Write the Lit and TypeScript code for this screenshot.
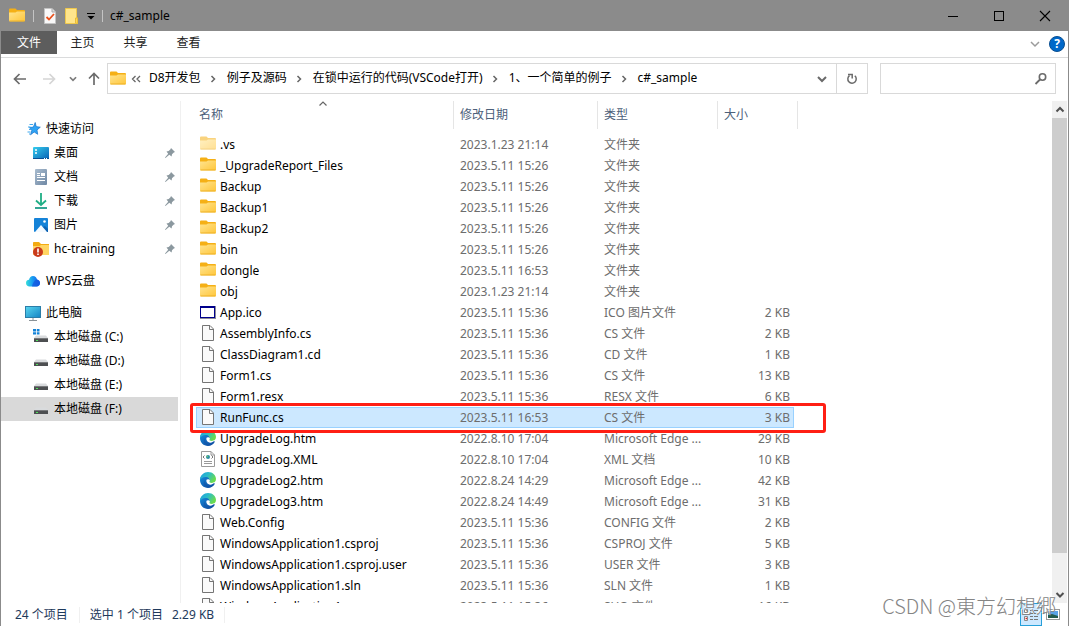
import { LitElement, html, css, svg, nothing, TemplateResult } from "lit";
import { customElement, property } from "lit/decorators.js";
import { classMap } from "lit/directives/class-map.js";

const folder = (light = false) => html`<svg class="icon" width="16" height="16" viewBox="0 0 16 16" opacity=${light ? "0.55" : "1"}>
  <defs><linearGradient id="fold" x1="0" y1="0" x2="1" y2="1"><stop offset="0" stop-color="#ffe48f" /><stop offset="1" stop-color="#ffc63a" /></linearGradient></defs>
  <path d="M0 1.500Q0 .5 1 .5H6.500L8 2H15Q16 2 16 3V8H0Z" fill="#f5b016" />
  <path d="M0 4.500H6.500L8 3.500H16V12.500Q16 13.500 15 13.500H1Q0 13.500 0 12.500Z" fill="url(#fold)" />
  <path d="M.5 13H15.500" stroke="#e9a91c" stroke-width=".8" />
</svg>`;

const page = () => html`<svg class="icon" width="16" height="16" viewBox="0 0 16 16">
  <path d="M2.500 .5H10L13.500 4V15.500H2.500Z" fill="#fafafa" stroke="#757575" />
  <path d="M9.500 .5V4.500H13.500" fill="none" stroke="#757575" />
</svg>`;

const ico = () => html`<svg class="icon" width="16" height="16" viewBox="0 0 16 16">
  <rect x="0" y="2" width="16" height="13" fill="#8c8c98" /><rect x="0" y="2" width="15" height="12" fill="#00008b" />
  <rect x="1" y="4" width="13" height="9" fill="#fff" />
</svg>`;

const xml = () => html`<svg class="icon" width="16" height="16" viewBox="0 0 16 16">
  <path d="M1.500 .5H11L14.500 4V15.500H1.500Z" fill="#fff" stroke="#9a9a9a" /><path d="M11 .5V4H14.500" fill="none" stroke="#9a9a9a" />
  <path d="M4.500 4.500L3 6L4.500 7.500M11.500 4.500L13 6L11.500 7.500" fill="none" stroke="#666" stroke-width=".9" /><circle cx="8" cy="6" r="2" fill="#2f8fa3" />
  <circle cx="7.400" cy="5.400" r=".8" fill="#69c56c" /><path d="M4 10.500H12M4 12.500H12" stroke="#999" />
</svg>`;

const edge = () => html`<svg class="icon" width="16" height="16" viewBox="0 0 16 16">
  <defs>
    <linearGradient id="eg" x1="0" y1="0" x2="1" y2=".5"><stop offset="0" stop-color="#1c9fe0" /><stop offset=".5" stop-color="#2bbcc8" /><stop offset="1" stop-color="#6bdc4c" /></linearGradient>
    <linearGradient id="eb" x1="0" y1="0" x2=".8" y2="1"><stop offset="0" stop-color="#1690e0" /><stop offset="1" stop-color="#0e4b9f" /></linearGradient>
  </defs>
  <path d="M0 8C0 3.500 3.500 1.500 7 2.500L10 7L8 10L15 11.500C13.500 14.300 11 16 8 16C3.600 16 0 12.400 0 8Z" fill="url(#eb)" />
  <path d="M0 8C.3 3 4 0 8 0C13 0 16 3.600 16 7C16 9.600 14 11 12 11C10 11 9 10.300 9.300 9.500C10.300 8 9.600 5.600 6.600 5C3.600 4.500 .8 6 0 8Z" fill="url(#eg)" />
  <path d="M6.500 7.800C7.300 6.700 9.200 7 9.600 8.300C9.500 9 9 9.400 9.300 10C9.800 10.900 12 11.300 14.500 10.300C12.800 12.700 10.200 13.200 8.200 12C6.700 11.100 6 9.400 6.500 7.800Z" fill="#fff" />
  <path d="M4.500 8.500C4.500 12 7.500 14.500 11.500 13.600C9 15.800 5.600 15.300 4.300 13.200C3.500 11.800 3.600 10 4.500 8.500Z" fill="#1454a8" opacity=".6" />
</svg>`;

const checkPage = () => html`<svg width="16" height="16" viewBox="0 0 16 16">
  <path d="M2.500 .5H10L13.500 4V15.500H2.500Z" fill="#f8f8f8" stroke="#c4c4c4" /><path d="M10 .5V4H13.500" fill="#ddd" stroke="#aaa" />
  <path d="M4.500 9L7 11.500L12 6" fill="none" stroke="#e8511d" stroke-width="1.800" />
</svg>`;

const note = () => html`<svg width="16" height="16" viewBox="0 0 16 16">
  <path d="M1.500 .5H12.500V10H13.500V15.500H1.500Z" fill="#ffe58c" stroke="#efc84d" /><path d="M11.500 15V10H13.500V15.500Z" fill="#fbd55c" stroke="#e9bc35" />
</svg>`;

const line = (d: string, color: string, width = 2, size = 16) => html`<svg width=${size} height=${size} viewBox="0 0 16 16">
  <path d=${d} fill="none" stroke=${color} stroke-width=${width} />
</svg>`;

const star = () => html`<svg class="icon" width="16" height="16" viewBox="0 0 16 16">
  <path d="M10.200 1.500L11.200 5.600L15.300 6.200L12 8.900L12.700 13.300L9.200 11L5.500 13.800L6.800 9.600L4.500 6.600L8.400 6Z" fill="#2fa4f5" stroke="#1471c9" stroke-width=".7" />
  <path d="M4.500 3.500H8M3 6H5.500M4 8.500H6M2.500 11H5.500M4 13H5" stroke="#3fa8ee" stroke-width="1" />
</svg>`;

const desktop = () => html`<svg class="icon" width="16" height="16" viewBox="0 0 16 16">
  <defs><linearGradient id="dk" x1="0" y1="0" x2="1" y2="1"><stop offset="0" stop-color="#35cdee" /><stop offset="1" stop-color="#0962b5" /></linearGradient></defs>
  <rect y="2" width="16" height="12" rx="1" fill="url(#dk)" /><path d="M2 5H4M2 8H4" stroke="#fff" stroke-width="1.600" />
  <path d="M0 13.500H16" stroke="#075096" /><path d="M11 13.500H12M13 13.500H14" stroke="#fff" />
</svg>`;

const doc = () => html`<svg class="icon" width="16" height="16" viewBox="0 0 16 16">
  <defs><linearGradient id="dc" x1="0" y1="0" x2="1" y2="1"><stop offset="0" stop-color="#a9bccf" /><stop offset="1" stop-color="#6f88a4" /></linearGradient></defs>
  <rect x="2" y="0" width="12" height="16" rx="1" fill="url(#dc)" />
  <path d="M4 4.500H7M4 6.500H7M4 8.500H12M4 11.500H12" stroke="#fff" /><rect x="8" y="4" width="4" height="3" fill="#fff" />
</svg>`;

const download = () => html`<svg class="icon" width="16" height="16" viewBox="0 0 16 16">
  <path d="M8 0V12M3 7.500L8 12L13 7.500" fill="none" stroke="#1fae85" stroke-width="1.800" /><path d="M2 15H14" stroke="#1d9c8a" stroke-width="1.800" />
</svg>`;

const picture = () => html`<svg class="icon" width="16" height="16" viewBox="0 0 16 16">
  <rect x="1" y="1" width="14" height="14" rx="1" fill="#1583d8" /><path d="M10 10L12 9L15 12V15H10Z" fill="#0c63b3" /><path d="M2 15L8 8L14 15Z" fill="#f4faff" /><circle cx="11.500" cy="4.500" r="1.300" fill="#fff" />
</svg>`;

const shared = () => html`<svg class="icon" width="16" height="16" viewBox="0 0 16 16">
  <path d="M0 1.500Q0 1 1 1H6L8 3H16V6H0Z" fill="#f3ab12" /><path d="M0 5H6.500L8 4H16V14H0Z" fill="#ffd563" />
  <circle cx="5" cy="11" r="5" fill="#c93a1b" /><path d="M5 7.500V11.500M5 12.500V14" stroke="#fff" stroke-width="1.600" />
</svg>`;

const cloud = () => html`<svg class="icon" width="16" height="16" viewBox="0 0 16 16">
  <defs><linearGradient id="cl" x1="0" y1="0" x2="1" y2="0"><stop offset="0" stop-color="#35e0d8" /><stop offset=".45" stop-color="#1a9cf2" /><stop offset="1" stop-color="#1257e8" /></linearGradient></defs>
  <path d="M4.500 13.500C2.500 13.500 1 12 1 10C1 8 2.500 6.800 4 6.800C4.500 4.500 6 3 8 3C10.300 3 11.500 4.500 12 6.500C13.800 6.800 15 8.200 15 10C15 12 13.500 13.500 11.500 13.500Z" fill="url(#cl)" />
  <path d="M7 13.500C7.500 10 9.500 7 12 6.500C13.800 6.800 15 8.200 15 10C15 12 13.500 13.500 11.500 13.500Z" fill="#1457dd" opacity=".75" />
</svg>`;

const monitor = () => html`<svg class="icon" width="16" height="16" viewBox="0 0 16 16">
  <defs><linearGradient id="mo" x1="0" y1="0" x2="1" y2="1"><stop offset="0" stop-color="#5ad7f0" /><stop offset="1" stop-color="#1584c4" /></linearGradient></defs>
  <rect x=".5" y="1.500" width="15" height="11" fill="url(#mo)" stroke="#2b7da8" /><path d="M8 13V15M4 15.500H12" stroke="#8a9297" />
</svg>`;

const disk = (win = false) => html`<svg class="icon" width="16" height="16" viewBox="0 0 16 16">
  <path d="M3 6.500H13L15 9H1Z" fill="#d9dbdd" /><rect x="1" y="9" width="14" height="4" fill="#4d4f51" /><path d="M1 9.500H15" stroke="#77797b" /><path d="M3 11.500H5" stroke="#4fe05a" />
  ${win ? svg`<path d="M0 0H7V6H0Z" fill="#fff" /><path d="M0 0H3V2.500H0ZM3.800 0H6.500V2.500H3.800ZM0 3.200H3V5.500H0ZM3.800 3.200H6.500V5.500H3.800Z" fill="#1382d8" />` : nothing}
</svg>`;

const pin = () => html`<svg class="pin" width="10" height="10" viewBox="0 0 10 10">
  <path d="M6 0L10 4L8.800 4.500L7 6.300L6.600 8.500L4.300 6.800L.5 9.900L0 9.500L3.200 5.700L1.500 3.400L3.700 3L5.500 1.200Z" fill="#8b989f" />
</svg>`;

type IconKind = "folder" | "light" | "page" | "ico" | "xml" | "edge";
const fileIcons: Record<IconKind, () => TemplateResult> = {
  folder: () => folder(), light: () => folder(true), page, ico, xml, edge,
};

interface Entry { icon: IconKind; name: string; date: string; type: string; size: string; selected?: boolean }
const e = (icon: IconKind, name: string, date: string, type = "文件夹", size = "", selected = false): Entry => ({ icon, name, date, type, size, selected });

const entries: Entry[] = [
  e("light", ".vs", "2023.1.23 21:14"),
  e("folder", "_UpgradeReport_Files", "2023.5.11 15:26"),
  e("folder", "Backup", "2023.5.11 15:26"),
  e("folder", "Backup1", "2023.5.11 15:26"),
  e("folder", "Backup2", "2023.5.11 15:26"),
  e("folder", "bin", "2023.5.11 15:26"),
  e("folder", "dongle", "2023.5.11 16:53"),
  e("folder", "obj", "2023.1.23 21:14"),
  e("ico", "App.ico", "2023.5.11 15:36", "ICO 图片文件", "2 KB"),
  e("page", "AssemblyInfo.cs", "2023.5.11 15:36", "CS 文件", "2 KB"),
  e("page", "ClassDiagram1.cd", "2023.5.11 15:36", "CD 文件", "1 KB"),
  e("page", "Form1.cs", "2023.5.11 15:36", "CS 文件", "13 KB"),
  e("page", "Form1.resx", "2023.5.11 15:36", "RESX 文件", "6 KB"),
  e("page", "RunFunc.cs", "2023.5.11 16:53", "CS 文件", "3 KB", true),
  e("edge", "UpgradeLog.htm", "2022.8.10 17:04", "Microsoft Edge ...", "29 KB"),
  e("xml", "UpgradeLog.XML", "2022.8.10 17:04", "XML 文档", "10 KB"),
  e("edge", "UpgradeLog2.htm", "2022.8.24 14:29", "Microsoft Edge ...", "42 KB"),
  e("edge", "UpgradeLog3.htm", "2022.8.24 14:49", "Microsoft Edge ...", "31 KB"),
  e("page", "Web.Config", "2023.5.11 15:36", "CONFIG 文件", "2 KB"),
  e("page", "WindowsApplication1.csproj", "2023.5.11 15:36", "CSPROJ 文件", "5 KB"),
  e("page", "WindowsApplication1.csproj.user", "2023.5.11 15:36", "USER 文件", "3 KB"),
  e("page", "WindowsApplication1.sln", "2023.5.11 15:36", "SLN 文件", "1 KB"),
  e("page", "WindowsApplication1.suo", "2023.5.11 15:36", "SUO 文件", "16 KB"),
];

const base = css`
  :host { display: block; }
  * { box-sizing: border-box; }
  svg { display: block; flex: none; }
  button { font: inherit; color: inherit; background: none; border: 0; padding: 0; display: flex; align-items: center; justify-content: center; }
  a { color: inherit; text-decoration: none; }
`;

@customElement("title-bar")
class TitleBar extends LitElement {
  static styles = [base, css`
    .bar { display: flex; align-items: center; height: 31px; background: #8b8b8b; padding-left: 8px; }
    .quick { display: flex; align-items: center; }
    .sep { width: 1px; height: 12px; background: #c4c4c4; margin: 0 8px; }
    .sep.last { margin: 0 7px 0 6px; }
    .quick button { margin-right: 6px; }
    .quick .more { margin-right: 0; }
    .title { flex: 1; margin: 0; font-size: 12px; font-weight: 400; }
    .win { display: flex; }
    .win button { width: 46px; height: 31px; }
  `];
  render() {
    return html`<header class="bar">
      <div class="quick">
        ${folder()}<span class="sep"></span>
        <button aria-label="属性">${checkPage()}</button>
        <button aria-label="新建文件夹">${note()}</button>
        <button class="more" aria-label="自定义快速访问工具栏">
          <svg width="10" height="12" viewBox="1 0 10 12"><path d="M2 3.500H10" stroke="#000" /><path d="M2.500 6H9.500L6 9.500Z" /></svg>
        </button>
        <span class="sep last"></span>
      </div>
      <h1 class="title">c#_sample</h1>
      <div class="win">
        <button aria-label="最小化"><svg width="12" height="12" viewBox="0 0 12 12"><path d="M1 6.500H11" stroke="#000" /></svg></button>
        <button aria-label="最大化"><svg width="12" height="12" viewBox="0 0 12 12"><rect x="1.500" y="1.500" width="9" height="9" fill="none" stroke="#000" /></svg></button>
        <button aria-label="关闭"><svg width="12" height="12" viewBox="0 0 12 12"><path d="M1 1L11 11M11 1L1 11" stroke="#000" stroke-width="1.100" /></svg></button>
      </div>
    </header>`;
  }
}

@customElement("ribbon-tabs")
class RibbonTabs extends LitElement {
  static styles = [base, css`
    .tabs { display: flex; height: 27px; border-bottom: 1px solid #dadbdc; color: #222; padding-right: 1px; }
    .tab { width: 53px; height: 24px; padding: 0 2px 0 0; }
    .tab.file { width: 56px; height: 23px; padding: 0; background: #5d5d5d; color: #fff; }
    .space { flex: 1; }
    .expand { width: 24px; height: 26px; }
    .help { width: 20px; height: 26px; }
    .dot { width: 16px; height: 16px; border-radius: 50%; background: #0068c9; border: 1px solid #0a4f91; color: #fff; font-size: 12px; line-height: 14px; font-weight: 700; text-align: center; }
  `];
  render() {
    return html`<nav class="tabs">
      <button class="tab file">文件</button>
      ${["主页", "共享", "查看"].map((t) => html`<button class="tab">${t}</button>`)}
      <span class="space"></span>
      <button class="expand" aria-label="展开功能区">${line("M4 6L8 10L12 6", "#9b9b9b", 1.5)}</button>
      <button class="help" aria-label="帮助"><span class="dot">?</span></button>
    </nav>`;
  }
}

@customElement("address-row")
class AddressRow extends LitElement {
  static styles = [base, css`
    .row { display: flex; align-items: center; padding: 5px 12px 7px 10px; }
    .nav { display: flex; align-items: center; height: 31px; }
    .back { width: 18px; }
    .fwd { width: 40px; }
    .recent { width: 8px; }
    .up { width: 34px; }
    .box { flex: 1; display: flex; align-items: center; height: 31px; border: 1px solid #d9d9d9; padding-left: 2px; margin-left: -4px; }
    .skip { width: 17px; margin: 0 5px 0 1px; }
    .crumbs { display: flex; flex: 1; margin: 0; padding: 0 0 2px; list-style: none; }
    .crumb { display: flex; align-items: center; white-space: nowrap; }
    .chev { display: flex; justify-content: center; width: 26px; padding-right: 2px; }
    .drop { width: 28px; height: 29px; }
    .refresh { width: 31px; height: 29px; border-left: 1px solid #d9d9d9; }
    .search { display: flex; align-items: center; width: 176px; height: 31px; margin-left: 12px; border: 1px solid #d9d9d9; padding-right: 6px; }
    .search input { flex: 1; min-width: 0; height: 27px; border: 0; padding: 0 8px; font: inherit; outline: 0; background: none; }
  `];
  render() {
    const parts = ["D8开发包", "例子及源码", "在锁中运行的代码(VSCode打开)", "1、一个简单的例子", "c#_sample"];
    return html`<div class="row">
      <div class="nav">
        <button class="back" aria-label="后退">${line("M14 8H3M7.500 3L2.500 8L7.500 13", "#6b6b6b", 1.700)}</button>
        <button class="fwd" aria-label="前进">${line("M2 8H13M8.500 3L13.500 8L8.500 13", "#d5d5d5", 1.700)}</button>
        <button class="recent" aria-label="最近浏览的位置">${line("M4.500 6L8 9.500L11.500 6", "#7c7c7c", 2, 14)}</button>
        <button class="up" aria-label="上移">${line("M8 14V3M3 7.500L8 2.500L13 7.500", "#6b6b6b", 1.700)}</button>
      </div>
      <div class="box">
        ${folder()}
        <button class="skip" aria-label="上级位置">${line("M7.500 5L4.500 8L7.500 11M12 5L9 8L12 11", "#666", 1.300)}</button>
        <ol class="crumbs">
          ${parts.map((p, i) => html`<li class="crumb">${i ? html`<span class="chev">${line("M6.500 6L9.500 9L6.500 12", "#666", 1.500)}</span>` : nothing}<a href="#">${p}</a></li>`)}
        </ol>
        <button class="drop" aria-label="以前的位置">${line("M4 6L8 10L12 6", "#6a6a6a", 2)}</button>
        <button class="refresh" aria-label="刷新">
          <svg width="16" height="16" viewBox="0 0 16 16"><path d="M10.800 4.800A4.200 4.200 0 1 1 5.500 4.600M4 3.500H8.200V7.500" fill="none" stroke="#6b6b6b" stroke-width="1.500" /></svg>
        </button>
      </div>
      <div class="search">
        <input type="search" aria-label="搜索" />
        <svg width="16" height="16" viewBox="0 0 16 16"><circle cx="9.500" cy="6" r="3.200" fill="none" stroke="#6b6b6b" stroke-width="1.600" /><path d="M7 8.500L2.500 13" stroke="#6b6b6b" stroke-width="1.800" /></svg>
      </div>
    </div>`;
  }
}

@customElement("nav-tree")
class NavTree extends LitElement {
  static styles = [base, css`
    .tree { display: flex; flex-direction: column; gap: 8px; padding-top: 16px; height: 100%; border-right: 1px solid #f0f0f0; padding-right: 2px; }
    .group { margin: 0; padding: 0; list-style: none; }
    .item { display: flex; align-items: center; gap: 5px; height: 24px; padding: 0 3px 0 32px; white-space: nowrap; }
    .item.root { padding-left: 24px; }
    .item.active { background: #d9d9d9; }
    .item a { flex: 1; }
  `];
  item(icon: TemplateResult, label: string, o: { root?: boolean; pinned?: boolean; active?: boolean } = {}) {
    return html`<li class=${classMap({ item: true, root: !!o.root, active: !!o.active })}>${icon}<a href="#">${label}</a>${o.pinned ? pin() : nothing}</li>`;
  }
  render() {
    const pinned = { pinned: true };
    const root = { root: true };
    return html`<nav class="tree">
      <ul class="group">
        ${this.item(star(), "快速访问", root)}
        ${this.item(desktop(), "桌面", pinned)}
        ${this.item(doc(), "文档", pinned)}
        ${this.item(download(), "下载", pinned)}
        ${this.item(picture(), "图片", pinned)}
        ${this.item(shared(), "hc-training", pinned)}
      </ul>
      <ul class="group">${this.item(cloud(), "WPS云盘", root)}</ul>
      <ul class="group">
        ${this.item(monitor(), "此电脑", root)}
        ${this.item(disk(true), "本地磁盘 (C:)")}
        ${this.item(disk(), "本地磁盘 (D:)")}
        ${this.item(disk(), "本地磁盘 (E:)")}
        ${this.item(disk(), "本地磁盘 (F:)", { active: true })}
      </ul>
    </nav>`;
  }
}

@customElement("file-list")
class FileList extends LitElement {
  @property({ attribute: false }) items: Entry[] = [];
  static styles = [base, css`
    :host { overflow: hidden; }
    .files { table-layout: fixed; width: 602px; margin-left: 15px; border-collapse: separate; border-spacing: 0; }
    .c-name { width: 258px; } .c-date { width: 144px; } .c-type { width: 120px; } .c-size { width: 76px; } .c-end { width: 4px; }
    th { height: 28px; padding: 0 0 0 6px; border-right: 1px solid #e5e5e5; text-align: left; font-weight: 400; color: #4c607a; }
    th.sorted { position: relative; padding-left: 3px; }
    .arrow { position: absolute; top: -5px; left: 119px; }
    .gap td { height: 5px; border: 0; }
    td { height: 21px; padding: 0 0 0 6px; color: #6d6d6d; white-space: nowrap; line-height: 19px; border: solid transparent; border-width: 1px 0; }
    .name { padding-left: 4px; color: #000; }
    .cell { display: flex; align-items: center; gap: 4px; height: 19px; }
    .cell svg { margin-bottom: 2px; }
    .size { padding: 0 4px 0 0; text-align: right; }
    .end { padding: 0; border: 0; }
    .picked { position: relative; }
    .picked td { background: #cce8ff; border-color: #99d1ff; }
    .picked .name { border-left: 1px solid #99d1ff; padding-left: 3px; }
    .picked .size { border-right: 1px solid #99d1ff; padding-right: 3px; }
    .picked .end { background: none; }
    .mark { position: absolute; inset: -4px -28px -5px -6px; border: 3px solid #ff1f14; border-radius: 3px; z-index: 1; }
  `];
  render() {
    return html`<table class="files">
      <colgroup><col class="c-name" /><col class="c-date" /><col class="c-type" /><col class="c-size" /><col class="c-end" /></colgroup>
      <thead><tr>
        <th class="sorted" aria-sort="ascending">名称<span class="arrow">${line("M4.500 9.500L8 6L11.500 9.500", "#666", 1.200)}</span></th>
        <th>修改日期</th><th>类型</th><th colspan="2">大小</th>
      </tr></thead>
      <tbody>
        <tr class="gap"><td colspan="5"></td></tr>
        ${this.items.map((f) => html`<tr class=${f.selected ? "picked" : ""}>
          <td class="name"><div class="cell">${fileIcons[f.icon]()}<span>${f.name}</span></div></td>
          <td>${f.date}</td><td>${f.type}</td><td class="size">${f.size}</td>
          <td class="end">${f.selected ? html`<span class="mark"></span>` : nothing}</td>
        </tr>`)}
      </tbody>
    </table>`;
  }
}

@customElement("app-root")
class AppRoot extends LitElement {
  static styles = [base, css`
    :host { font: 12px/16px "Noto Sans", "Noto Sans CJK SC", sans-serif; color: #000; }
    .window { display: flex; flex-direction: column; height: 100vh; background: #fff; border: solid #8b8b8b; border-width: 0 1px; margin-right: 1px; position: relative; overflow: hidden; }
    .body { flex: 1; display: grid; grid-template-columns: 180px 1fr 15px; min-height: 0; overflow: hidden; padding-right: 1px; }
    .scroll { display: flex; flex-direction: column; background: #f0f0f0; }
    .scroll button { height: 17px; flex: none; }
    .track { flex: 1; }
    .thumb { height: 93%; background: #cdcdcd; }
    .status { display: flex; align-items: center; height: 23px; flex: none; color: #1e395b; padding: 0 4px 0 14px; }
    .count { padding-right: 11px; margin-right: 10px; border-right: 1px solid #f0f0f0; }
    .size { margin-left: 9px; padding-right: 10px; border-right: 1px solid #f0f0f0; }
    .fill { flex: 1; }
    .view { width: 22px; height: 23px; }
    .view.on { background: #cce8ff; border: 1px solid #26a0da; }
    .watermark { position: absolute; right: 12px; bottom: 7px; font: 300 20px/26px "Noto Sans CJK SC", sans-serif; color: #858585; text-shadow: -1px -1px 0 #fff; pointer-events: none; }
  `];
  render() {
    return html`<div class="window">
      <title-bar></title-bar>
      <ribbon-tabs></ribbon-tabs>
      <address-row></address-row>
      <main class="body">
        <nav-tree></nav-tree>
        <file-list .items=${entries}></file-list>
        <div class="scroll">
          <button aria-label="向上滚动">${line("M4.500 9.500L8 6L11.500 9.500", "#505050", 2)}</button>
          <div class="track"><div class="thumb"></div></div>
          <button aria-label="向下滚动">${line("M4.500 6L8 9.500L11.500 6", "#505050", 2)}</button>
        </div>
      </main>
      <footer class="status">
        <span class="count">24 个项目</span><span>选中 1 个项目</span><span class="size">2.29 KB</span><span class="fill"></span>
        <button class="view on" aria-label="详细信息"><svg width="16" height="16" viewBox="0 0 16 16">
          <path d="M1.500 2.500H4.500V5.500H1.500ZM1.500 9.500H4.500V13.500H1.500Z" fill="#fff" stroke="#888" /><path d="M2.500 11.500H4" stroke="#e02020" stroke-width="1.500" /><path d="M7 3.500H10M11 3.500H15M7 6.500H10M11 6.500H15M7 9.500H10M11 9.500H15M7 12.500H10M11 12.500H15" stroke="#777" />
        </svg></button>
        <button class="view" aria-label="大图标"><svg width="14" height="11" viewBox="0 0 14 11">
          <rect x=".5" y=".5" width="13" height="10" fill="#fff" stroke="#999" /><rect x="2" y="2" width="10" height="7" fill="#5aa2e6" /><path d="M2 9V6L6 5L12 7V9Z" fill="#235a4c" />
        </svg></button>
      </footer>
      <div class="watermark">CSDN @東方幻想郷</div>
    </div>`;
  }
}
